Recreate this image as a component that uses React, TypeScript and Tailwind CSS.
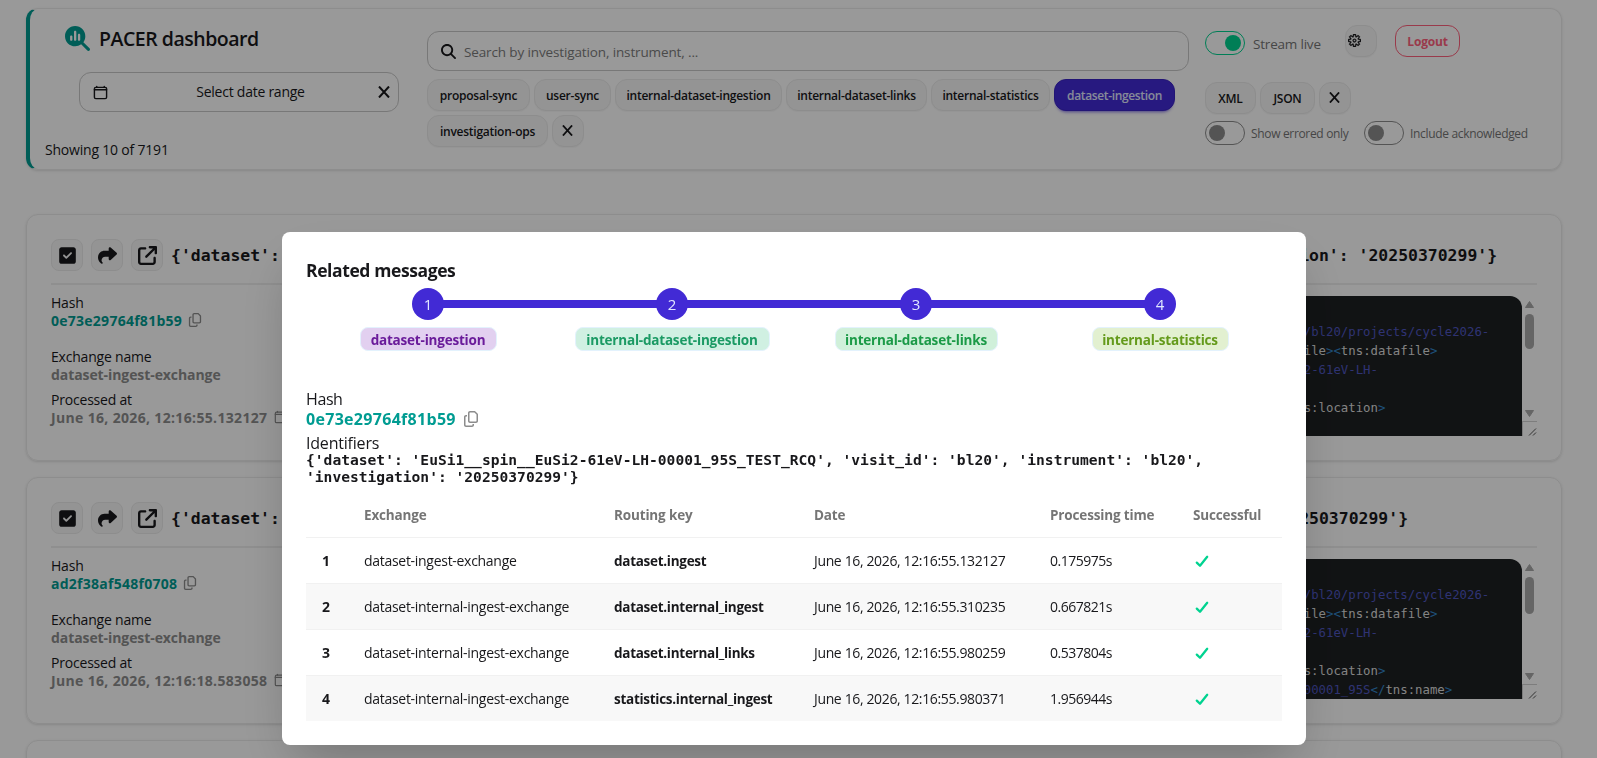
import type { ReactNode } from "react"
import clsx from "clsx"
import {
  FaArrowUpRightFromSquare,
  FaMagnifyingGlass,
  FaMagnifyingGlassChart,
  FaRegCopy,
  FaShare,
  FaSquareCheck,
} from "react-icons/fa6"
import { IoCalendarClearOutline } from "react-icons/io5"
import { VscSettingsGear } from "react-icons/vsc"

const queues = [
  { name: "proposal-sync", width: "w-[103px]" },
  { name: "user-sync", width: "w-[77px]" },
  { name: "internal-dataset-ingestion", width: "w-[167px]" },
  { name: "internal-dataset-links", width: "w-[141px]" },
  { name: "internal-statistics", width: "w-[119px]" },
  { name: "dataset-ingestion", width: "w-[121px]", active: true },
  { name: "investigation-ops", width: "w-[121px]" },
]

type Token = [string, "tag" | "bracket" | "text"]

const baseXml: Token[][] = [
  [["<", "bracket"], ["tns:files", "tag"], ["><", "bracket"], ["tns:file", "tag"], [">", "bracket"], ["/snfs/dir/bl20/projects/cycle2026-", "text"]],
  [["0raw", "text"], ["</", "bracket"], ["tns:location", "tag"], ["></", "bracket"], ["tns:datafile", "tag"], ["><", "bracket"], ["tns:datafile", "tag"], [">", "bracket"]],
  [["<", "bracket"], ["tns:location", "tag"], [">", "bracket"], ["uSi1__spin__EuSi2-61eV-LH-", "text"]],
  [["00001_95S.nxs", "text"]],
  [["/rcq/00001_95S_TEST_RCQ.h5", "text"], ["</", "bracket"], ["tns:location", "tag"], [">", "bracket"]],
]

const nameLine: Token[] = [
  ["<", "bracket"], ["tns:name", "tag"], [">", "bracket"],
  ["spin__EuSi2-61eV-LH-00001_95S", "text"],
  ["</", "bracket"], ["tns:name", "tag"], [">", "bracket"],
]

const messages = [
  {
    hash: "0e73e29764f81b59",
    title: "{'dataset': 'EuSi1__spin__EuSi2-61eV-LH-00001_95S_TEST_RCQ', 'visit_id': 'bl20', 'instrument': 'bl20', 'investigation': '20250370299'}",
    date: "June 16, 2026, 12:16:55.132127",
    xml: baseXml,
    thumb: "h-[35px]",
  },
  {
    hash: "ad2f38af548f0708",
    title: "{'dataset': 'EuSi1__spin__EuSi2-61eV-LH-00001_95S', 'visit_id': 'bl20', 'instrument': 'bl20', 'investigation': '20250370299'}",
    date: "June 16, 2026, 12:16:18.583058",
    xml: [...baseXml, nameLine],
    thumb: "h-[37px]",
  },
]

const steps = [
  { name: "dataset-ingestion", style: "w-[137px] bg-[#e2d0f0] text-[#6a1b9a]" },
  { name: "internal-dataset-ingestion", style: "w-[195px] bg-[#d0f0e2] text-[#1b9a64]" },
  { name: "internal-dataset-links", style: "w-[163px] bg-[#d0f0da] text-[#1b9a47]" },
  { name: "internal-statistics", style: "w-[137px] bg-[#e2f0d0] text-[#649a1b]" },
]

const rows = [
  ["dataset-ingest-exchange", "dataset.ingest", "June 16, 2026, 12:16:55.132127", "0.175975s"],
  ["dataset-internal-ingest-exchange", "dataset.internal_ingest", "June 16, 2026, 12:16:55.310235", "0.667821s"],
  ["dataset-internal-ingest-exchange", "dataset.internal_links", "June 16, 2026, 12:16:55.980259", "0.537804s"],
  ["dataset-internal-ingest-exchange", "statistics.internal_ingest", "June 16, 2026, 12:16:55.980371", "1.956944s"],
]

function Cross({ className }: { className?: string }) {
  return (
    <svg viewBox="0 0 12 12" className={clsx("shrink-0", className)} fill="none" stroke="currentColor" strokeWidth="2">
      <path d="M1 0.5 L11 11.5 M11 0.5 L1 11.5" />
    </svg>
  )
}

function Check() {
  return (
    <svg viewBox="0 0 14 13" className="ml-0.5 h-[13px] w-3.5" fill="none" stroke="#00d390" strokeWidth="2.3" strokeLinecap="round" strokeLinejoin="round">
      <path d="M1.8 7.6 L5 10.8 L12.2 1.8" />
    </svg>
  )
}

function Chip({ children, className, active }: { children: ReactNode; className?: string; active?: boolean }) {
  return (
    <button
      className={clsx(
        "flex h-8 shrink-0 items-center justify-center whitespace-nowrap rounded-xl border pt-0.5 text-xs font-semibold",
        active
          ? "border-[#3a23c4] bg-[#422ad5] tracking-[-0.35px] text-[#e0e7ff] shadow-[0_3px_2px_-2px_#422ad54d,0_4px_3px_-2px_#422ad54d]"
          : "border-[#ebebeb] bg-[#f7f7f7] tracking-[-0.25px] text-[#18181b] shadow-[0_1px_1px_rgba(0,0,0,0.03)]",
        className
      )}
    >
      {children}
    </button>
  )
}

function Toggle({ on }: { on?: boolean }) {
  return (
    <span
      className={clsx(
        "flex h-6 w-10 shrink-0 items-center rounded-full border p-[3px]",
        on ? "justify-end border-[#00d390] text-[#00d390]" : "border-[#8c8c8c] text-[#8c8c8c]"
      )}
    >
      <span className="h-4 w-4 rounded-full bg-current" />
    </span>
  )
}

function Header() {
  return (
    <header className="flex h-[162px] rounded-xl border border-l-4 border-[#ebebeb] border-l-[#009c92] shadow-sm">
      <div className="w-[397px] shrink-0 pt-[14px]">
        <div className="flex h-[30px] items-center gap-[9px] pl-[35px]">
          <FaMagnifyingGlassChart className="h-[25px] w-[25px] text-[#009c92]" />
          <h1 className="pt-0.5 text-[19.5px] font-semibold tracking-[-0.48px]">PACER dashboard</h1>
        </div>
        <div className="ml-[49px] mt-[19px] flex h-10 w-80 items-center rounded-xl border border-[#c9c9c9] pl-[13px] pr-2">
          <IoCalendarClearOutline className="h-[15px] w-[15px] [&_*]:stroke-[48px]" />
          <span className="flex-1 pl-[15px] text-center text-sm tracking-[-0.25px]">Select date range</span>
          <Cross className="h-3 w-3" />
        </div>
        <p className="ml-[15px] mt-[28px] text-sm tracking-[-0.2px]">Showing 10 of 7191</p>
      </div>

      <div className="w-[762px] shrink-0 pt-[22px]">
        <div className="flex h-10 items-center gap-2 rounded-xl border border-[#c9c9c9] px-[13px]">
          <FaMagnifyingGlass className="h-[15px] w-[15px]" />
          <span className="pt-0.5 text-[13.5px] tracking-[-0.13px] text-[#7c7c7c]">Search by investigation, instrument, ...</span>
        </div>
        <div className="mt-2 flex flex-wrap gap-1">
          {queues.map((q) => (
            <Chip key={q.name} active={q.active} className={q.width}>
              {q.name}
            </Chip>
          ))}
          <Chip className="w-8 pr-px">
            <Cross className="mb-1 h-[11px] w-[11px]" />
          </Chip>
        </div>
      </div>

      <div className="ml-4 pt-4">
        <div className="flex">
          <label className="flex h-9 items-center gap-2 text-[#757575]">
            <Toggle on />
            <span className="w-[92px] pt-0.5 text-[13.5px] tracking-[-0.2px]">Stream live</span>
          </label>
          <Chip className="w-8 justify-start pl-[2px] pr-4">
            <VscSettingsGear className="mb-[3px] h-[13px] w-[13px] shrink-0 stroke-[0.6]" />
          </Chip>
          <button className="ml-[18px] h-8 w-[65px] rounded-xl border border-[#ff627d] pt-0.5 text-xs font-bold tracking-[-0.2px] text-[#ff627d]">
            Logout
          </button>
        </div>
        <div className="mt-[21px] flex gap-1">
          <Chip className="w-[51px]">XML</Chip>
          <Chip className="w-[55px]">JSON</Chip>
          <Chip className="w-8 pr-px">
            <Cross className="mb-1 h-[11px] w-[11px]" />
          </Chip>
        </div>
        <div className="mt-[7px] flex items-center text-xs tracking-[-0.33px] text-[#757575]">
          <Toggle />
          <span className="ml-1.5 w-[113px] pt-0.5">Show errored only</span>
          <Toggle />
          <span className="ml-1.5 pt-0.5">Include acknowledged</span>
        </div>
      </div>
    </header>
  )
}

function CodeBlock({ xml, thumb }: { xml: Token[][]; thumb: string }) {
  return (
    <div className="mt-[2px] flex h-[140px] w-[477px] overflow-hidden">
      <pre className="w-[462px] overflow-hidden rounded-tl-xl rounded-tr-xl bg-[#1d2022] pl-[21px] pt-[27px] font-['DejaVu_Sans_Mono',monospace] text-[12.34px] leading-[19px]">
        {xml.map((line, i) => (
          <div key={i}>
            {line.map(([text, kind], j) => (
              <span
                key={j}
                className={clsx(
                  kind === "tag" && "text-[#dcdcdc]",
                  kind === "bracket" && "text-[#3387cc]",
                  kind === "text" && "text-[#4f56c0]"
                )}
              >
                {text}
              </span>
            ))}
          </div>
        ))}
      </pre>
      <div className="flex w-[15px] flex-col items-center">
        <svg viewBox="0 0 9 7" className="mt-[5px] h-[7px] w-[9px]" fill="#a8a8a8">
          <path d="M4.5 0.5 L8.5 6.5 H0.5 Z" stroke="#a8a8a8" strokeLinejoin="round" />
        </svg>
        <div className={clsx("mt-[6px] w-[9px] rounded-full bg-[#a8a8a8]", thumb)} />
        <svg viewBox="0 0 9 7" className="mb-[4px] mt-auto h-[7px] w-[9px]" fill="#a8a8a8">
          <path d="M4.5 6.5 L8.5 0.5 H0.5 Z" stroke="#a8a8a8" strokeLinejoin="round" />
        </svg>
        <div className="flex h-[15px] w-full items-end justify-end border-l border-t border-[#d0d0d0]">
          <svg viewBox="0 0 9 9" className="h-[9px] w-[9px]" stroke="#555" strokeWidth="1">
            <path d="M1 8.5 L8 1.5 M5 8.5 L8 5.5" />
          </svg>
        </div>
      </div>
    </div>
  )
}

function IconButton({ children }: { children: ReactNode }) {
  return (
    <button className="flex h-8 w-8 shrink-0 items-center justify-center rounded-lg border border-[#ebebeb] bg-[#f7f7f7] text-[19px]">
      {children}
    </button>
  )
}

function MessageCard({ hash, title, date, xml, thumb }: (typeof messages)[number]) {
  return (
    <article className="h-[247px] shrink-0 rounded-xl border border-[#ebebeb] px-6 pt-6 shadow-sm">
      <div className="flex items-center gap-2 border-b-2 border-[#efefef] pb-3">
        <IconButton>
          <FaSquareCheck />
        </IconButton>
        <IconButton>
          <FaShare />
        </IconButton>
        <IconButton>
          <FaArrowUpRightFromSquare />
        </IconButton>
        <h2 className="whitespace-nowrap pt-px font-['DejaVu_Sans_Mono',monospace] text-[16.45px] font-bold leading-[31px]">{title}</h2>
      </div>
      <div className="flex justify-between pt-[9px]">
        <div className="text-sm leading-[17.5px]">
          <p className="font-medium tracking-[-0.2px]">Hash</p>
          <p className="flex items-center gap-[6px] font-bold tracking-[0.26px] text-[#009c92]">
            {hash}
            <FaRegCopy className="h-3.5 w-3.5 text-[#8c8c8c]" />
          </p>
          <p className="mt-[19px] font-medium tracking-[-0.2px]">Exchange name</p>
          <p className="font-bold tracking-[-0.08px] text-[#8c8c8c]">dataset-ingest-exchange</p>
          <p className="mt-2 font-medium tracking-[-0.2px]">Processed at</p>
          <p className="flex items-center gap-[7px] font-bold tracking-[0.34px] text-[#8c8c8c]">
            {date}
            <IoCalendarClearOutline className="h-3.5 w-3.5 [&_*]:stroke-[44px]" />
          </p>
        </div>
        <CodeBlock xml={xml} thumb={thumb} />
      </div>
    </article>
  )
}

function RelatedMessages() {
  return (
    <div className="h-[513px] w-[1024px] rounded-lg bg-white p-6 shadow-2xl">
      <h3 className="pt-px text-[17.5px] font-bold leading-[27px] tracking-[-0.4px]">Related messages</h3>
      <ol className="mt-1 grid grid-cols-4">
        {steps.map((step, i) => (
          <li key={step.name} className="flex flex-col items-center">
            <div className="flex w-full items-center">
              <span className={clsx("h-2 flex-1", i > 0 && "bg-[#422ad5]")} />
              <span className="-mx-px flex h-8 w-8 items-center justify-center rounded-full bg-[#422ad5] text-[15px] text-[#e0e7ff]">
                {i + 1}
              </span>
              <span className={clsx("h-2 flex-1", i < 3 && "bg-[#422ad5]")} />
            </div>
            <span
              className={clsx(
                "mt-[7px] flex h-6 items-center justify-center rounded-lg border border-[#e3f2fd] pt-[3px] text-[13.5px] font-bold tracking-[-0.2px]",
                step.style
              )}
            >
              {step.name}
            </span>
          </li>
        ))}
      </ol>
      <div className="mt-[38px] leading-5">
        <p className="font-medium tracking-[-0.4px]">Hash</p>
        <p className="flex items-center gap-[7px] font-bold tracking-[0.3px] text-[#009c92]">
          0e73e29764f81b59
          <FaRegCopy className="h-4 w-4 text-[#8c8c8c]" />
        </p>
        <p className="mt-1 font-medium tracking-[-0.2px]">Identifiers</p>
      </div>
      <p className="-mt-0.5 font-['DejaVu_Sans_Mono',monospace] text-[14.62px] font-bold leading-[17px]">
        {messages[0].title}
      </p>
      <table className="mt-[7px] w-full table-fixed text-left text-sm">
        <colgroup>
          <col className="w-[42px]" />
          <col className="w-[250px]" />
          <col className="w-[200px]" />
          <col className="w-[236px]" />
          <col className="w-[143px]" />
          <col />
        </colgroup>
        <thead>
          <tr className="h-[45px] border-b border-[#f1f1f1] text-[#757575]">
            <th />
            {["Exchange", "Routing key", "Date", "Processing time", "Successful"].map((label) => (
              <th key={label} className="pl-4 pt-[3px] text-[13.5px] font-bold tracking-[-0.15px]">
                {label}
              </th>
            ))}
          </tr>
        </thead>
        <tbody>
          {rows.map(([exchange, key, date, time], i) => (
            <tr key={key} className="h-[46px] border-b border-[#f1f1f1] last:border-0 even:bg-[#f8f8f8]">
              <th className="pl-4 pt-0.5 font-bold">{i + 1}</th>
              <td className="pl-4 pt-0.5 tracking-[-0.29px]">{exchange}</td>
              <td className="pl-4 pt-[3px] text-[13.5px] font-bold tracking-[-0.28px]">{key}</td>
              <td className="pl-4 pt-0.5 tracking-[-0.36px]">{date}</td>
              <td className="pl-4 pt-0.5 tracking-[-0.5px]">{time}</td>
              <td className="pl-4 pt-0.5">
                <Check />
              </td>
            </tr>
          ))}
        </tbody>
      </table>
    </div>
  )
}

export default function App() {
  return (
    <div className="h-screen overflow-hidden bg-white font-['Open_Sans','Noto_Sans',sans-serif] text-[#18181b]">
      <main className="flex w-[1562px] flex-col pl-[26px] pt-2">
        <Header />
        <section className="mt-11 flex flex-col gap-4">
          {messages.map((m) => (
            <MessageCard key={m.hash} {...m} />
          ))}
          <article className="h-[247px] shrink-0 rounded-xl border border-[#ebebeb] shadow-sm" />
        </section>
      </main>
      <div className="fixed inset-0 flex items-start bg-black/40 pl-[282px] pt-[232px]">
        <RelatedMessages />
      </div>
    </div>
  )
}
